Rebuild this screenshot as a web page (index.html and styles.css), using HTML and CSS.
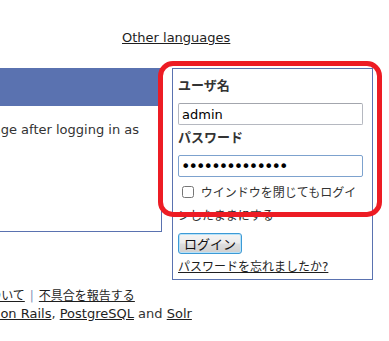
FILE: index.html
```html
<!DOCTYPE html>
<html lang="ja">
<head>
  <meta charset="UTF-8">
  <meta name="viewport" content="width=device-width, initial-scale=1.0">
  <title>ログイン</title>
  <link rel="stylesheet" href="styles.css">
</head>
<body>
  <div class="top">
    <a href="#" class="lang">Other languages</a>
  </div>

  <div class="main">
    <div class="intro-box">
      <div class="intro-bar"></div>
      <p class="intro">You will be returned to this page after logging in as</p>
    </div>

    <form class="login" onsubmit="return false">
      <div class="highlight"></div>
      <label class="field-label" for="username">ユーザ名</label>
      <input id="username" class="field" type="text" value="admin">
      <label class="field-label" for="password">パスワード</label>
      <input id="password" class="field focused" type="password" value="secretpasswd12">
      <p class="remember"><input type="checkbox" id="remember"> <label for="remember">ウインドウを閉じてもログインしたままにする</label></p>
      <button type="submit" class="submit">ログイン</button>
      <a href="#" class="forgot">パスワードを忘れましたか?</a>
    </form>
  </div>

  <div class="footer">
    <div class="footer-links"><a href="#">サイトについて</a><span class="sep">|</span><a href="#">不具合を報告する</a></div>
    <div class="powered">Powered by <a href="#">Ruby on Rails</a>, <a href="#">PostgreSQL</a> and <a href="#">Solr</a></div>
  </div>
</body>
</html>
```

FILE: styles.css
```css
body {
  font-family: "DejaVu Sans", "Noto Sans CJK JP", sans-serif;
  font-size: 13px;
  color: #333;
  margin: 0;
  overflow: hidden;
  background: #fff;
}
a {
  color: #1e1e1e;
}
.top {
  padding: 30px 0 0 122px;
  line-height: 16px;
}
.main {
  display: flex;
  align-items: flex-start;
  gap: 10px;
  margin-top: 22px;
}
.intro-box {
  box-sizing: border-box;
  flex: 0 0 auto;
  width: 462px;
  height: 164px;
  margin-left: -300px;
  border-right: 1px solid #5a72b0;
  border-bottom: 1px solid #5a72b0;
}
.intro-bar {
  height: 38px;
  background: #5a72b0;
}
.intro {
  margin: 15px 0 0;
  padding-right: 22px;
  line-height: 18px;
  text-align: right;
  white-space: nowrap;
}
.login {
  position: relative;
  box-sizing: border-box;
  flex: 0 0 auto;
  width: 201px;
  margin: 0;
  padding: 8px 9px 3px 5px;
  border: 1px solid #5a72b0;
  display: flex;
  flex-direction: column;
  align-items: flex-start;
}
.highlight {
  position: absolute;
  left: -15px;
  top: -8px;
  width: 224px;
  height: 156px;
  box-sizing: border-box;
  border: 5px solid #ed1c24;
  border-radius: 15px;
  pointer-events: none;
}
.field-label {
  font-weight: bold;
  line-height: 18px;
  margin-bottom: 8px;
}
.field {
  box-sizing: border-box;
  width: 100%;
  height: 22px;
  margin: 0 0 4px;
  padding: 1px 3px;
  font-family: "DejaVu Sans", sans-serif;
  font-size: 13px;
  color: #000;
  border: 1px solid #b5b8c0;
  border-top-color: #a3a6ad;
  border-radius: 2px;
  outline: none;
}
.field.focused {
  border-color: #7da2ce;
  margin-bottom: 0;
  padding: 0 2px;
  font-size: 16px;
  letter-spacing: -1.9px;
}
.remember {
  margin: 5px 0 0;
  font-size: 12px;
  line-height: 23px;
}
.remember input {
  width: 12px;
  height: 12px;
  margin: 0 3px 0 4px;
  vertical-align: -1px;
}
.submit {
  margin-top: 5px;
  height: 21px;
  padding: 0 5px;
  font-family: "Noto Sans CJK JP", sans-serif;
  font-size: 13px;
  line-height: 17px;
  color: #111;
  border: 1px solid #3c9ad6;
  border-radius: 3px;
  background: linear-gradient(#f4f4f4 0%, #ececec 48%, #dedede 52%, #d0d0d0 100%);
  box-shadow: inset 0 0 0 1px #b8e2f8;
}
.forgot {
  margin-top: 4px;
  font-size: 12px;
  line-height: 18px;
}
.footer {
  width: 476px;
  margin: 7px 0 0 -200px;
  text-align: center;
  line-height: 18px;
}
.footer-links {
  font-size: 12px;
}
.sep {
  color: #8593b8;
  margin: 0 5px;
}
```
